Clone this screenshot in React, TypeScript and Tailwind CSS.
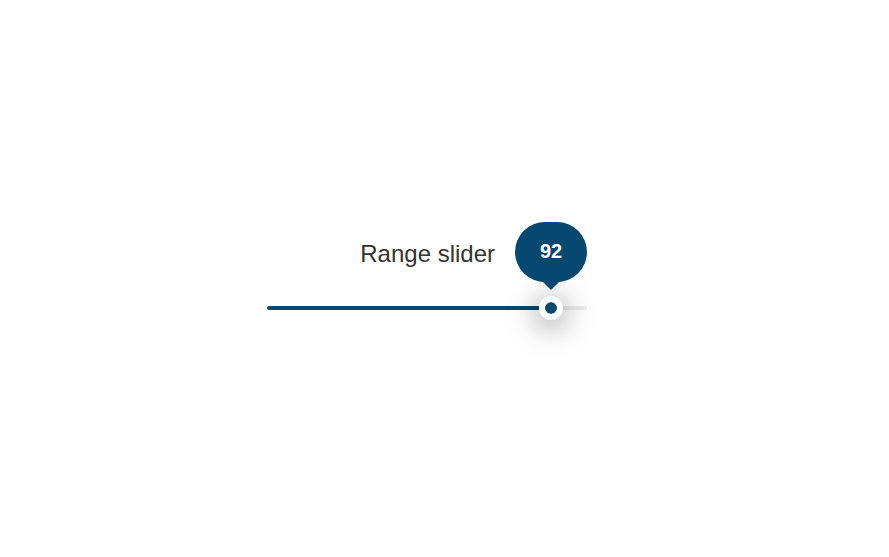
import { useState } from "react";
import type { CSSProperties } from "react";

const MIN = 0;
const MAX = 100;

export default function App() {
  const [value, setValue] = useState(92);
  const percent = ((value - MIN) / (MAX - MIN)) * 100;

  return (
    <main className="flex min-h-screen items-center justify-center bg-white pr-[35px] pb-[15px] font-['Liberation_Sans',Arial,sans-serif] text-[#333333]">
      <div className="flex w-80 flex-col gap-3.5">
        <div className="relative z-10 flex items-center justify-end gap-5">
          <label htmlFor="range" className="pt-1 text-2xl">
            Range slider
          </label>
          {/* Value bubble */}
          <output
            htmlFor="range"
            className="relative flex h-15 w-18 items-center justify-center rounded-[30px] bg-[#064870] pb-0.5 text-xl font-bold text-white"
          >
            {value}
            <span className="absolute top-full left-1/2 -mt-px -translate-x-1/2 border-x-9 border-t-9 border-x-transparent border-t-[#064870]" />
          </output>
        </div>

        <input
          id="range"
          type="range"
          min={MIN}
          max={MAX}
          value={value}
          onChange={(e) => setValue(Number(e.target.value))}
          style={{ "--fill": `${percent}%` } as CSSProperties}
          className="h-6 w-full cursor-pointer appearance-none bg-transparent outline-none
            [&::-webkit-slider-runnable-track]:h-1
            [&::-webkit-slider-runnable-track]:rounded-full
            [&::-webkit-slider-runnable-track]:bg-[linear-gradient(to_right,#064870_var(--fill),#ebebeb_var(--fill))]
            [&::-webkit-slider-thumb]:-mt-2.5
            [&::-webkit-slider-thumb]:size-6
            [&::-webkit-slider-thumb]:appearance-none
            [&::-webkit-slider-thumb]:rounded-full
            [&::-webkit-slider-thumb]:border-6
            [&::-webkit-slider-thumb]:border-white
            [&::-webkit-slider-thumb]:bg-[#064870]
            [&::-webkit-slider-thumb]:bg-clip-padding
            [&::-webkit-slider-thumb]:shadow-[0_5px_30px_rgba(0,0,0,0.6)]"
        />
      </div>
    </main>
  );
}
